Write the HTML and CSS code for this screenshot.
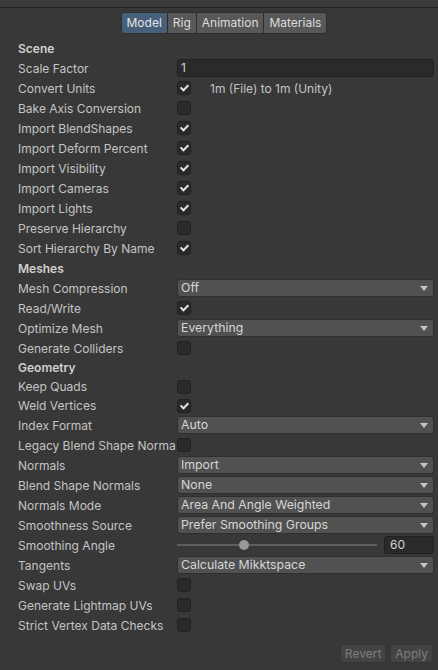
FILE: index.html
```html
<!DOCTYPE html>
<html>
<head>
<meta charset="utf-8">
<link rel="stylesheet" href="styles.css">
</head>
<body>
<div class="topbar"></div>
<div class="tabs">
  <div class="tab sel">Model</div>
  <div class="tab">Rig</div>
  <div class="tab">Animation</div>
  <div class="tab">Materials</div>
</div>
<div class="panel">
  <div class="row head h19"><span class="label">Scene</span></div>
  <div class="row"><span class="label">Scale Factor</span><div class="field text">1</div></div>
  <div class="row"><span class="label">Convert Units</span><span class="cb on"></span><span class="note">1m (File) to 1m (Unity)</span></div>
  <div class="row"><span class="label">Bake Axis Conversion</span><span class="cb"></span></div>
  <div class="row"><span class="label">Import BlendShapes</span><span class="cb on"></span></div>
  <div class="row"><span class="label">Import Deform Percent</span><span class="cb on"></span></div>
  <div class="row"><span class="label">Import Visibility</span><span class="cb on"></span></div>
  <div class="row"><span class="label">Import Cameras</span><span class="cb on"></span></div>
  <div class="row"><span class="label">Import Lights</span><span class="cb on"></span></div>
  <div class="row"><span class="label">Preserve Hierarchy</span><span class="cb"></span></div>
  <div class="row"><span class="label">Sort Hierarchy By Name</span><span class="cb on"></span></div>
  <div class="row head"><span class="label">Meshes</span></div>
  <div class="row"><span class="label">Mesh Compression</span><div class="field drop">Off</div></div>
  <div class="row"><span class="label">Read/Write</span><span class="cb on"></span></div>
  <div class="row"><span class="label">Optimize Mesh</span><div class="field drop">Everything</div></div>
  <div class="row"><span class="label">Generate Colliders</span><span class="cb"></span></div>
  <div class="row head h19"><span class="label">Geometry</span></div>
  <div class="row h19"><span class="label">Keep Quads</span><span class="cb"></span></div>
  <div class="row h19"><span class="label">Weld Vertices</span><span class="cb on"></span></div>
  <div class="row"><span class="label">Index Format</span><div class="field drop">Auto</div></div>
  <div class="row"><span class="label over">Legacy Blend Shape Norma</span><span class="cb"></span></div>
  <div class="row"><span class="label">Normals</span><div class="field drop">Import</div></div>
  <div class="row"><span class="label">Blend Shape Normals</span><div class="field drop">None</div></div>
  <div class="row"><span class="label">Normals Mode</span><div class="field drop">Area And Angle Weighted</div></div>
  <div class="row"><span class="label">Smoothness Source</span><div class="field drop">Prefer Smoothing Groups</div></div>
  <div class="row"><span class="label">Smoothing Angle</span>
    <div class="slider"><div class="track"><span class="thumb" style="left: 33.5%"></span></div><div class="field text num">60</div></div>
  </div>
  <div class="row"><span class="label">Tangents</span><div class="field drop">Calculate Mikktspace</div></div>
  <div class="row"><span class="label">Swap UVs</span><span class="cb"></span></div>
  <div class="row"><span class="label">Generate Lightmap UVs</span><span class="cb"></span></div>
  <div class="row"><span class="label">Strict Vertex Data Checks</span><span class="cb"></span></div>
</div>
<div class="footer">
  <button class="btn">Revert</button>
  <button class="btn">Apply</button>
</div>
</body>
</html>
```
FILE: styles.css
```css
html, body {
  margin: 0;
  padding: 0;
  background: #383838;
  width: 438px;
  height: 670px;
  overflow: hidden;
  font-family: Inter, "Noto Sans", sans-serif;
  font-size: 12px;
  color: #c4c4c4;
}
.topbar {
  height: 7px;
  background: #3a3a3a;
  border-bottom: 1px solid #232323;
}
.tabs {
  display: flex;
  justify-content: center;
  margin-top: 4px;
  height: 22px;
  padding-left: 10px;
}
.tab {
  box-sizing: border-box;
  height: 22px;
  line-height: 20px;
  padding: 0 5px;
  background: #585858;
  color: #dcdcdc;
  border: 1px solid #2e2e2e;
  border-left: none;
  font-size: 12px;
}
.tab:first-child {
  border-left: 1px solid #2e2e2e;
  border-radius: 3px 0 0 3px;
}
.tab:last-child {
  border-radius: 0 3px 3px 0;
}
.tab.sel {
  background: #46607c;
  color: #e4e4e4;
}
.panel {
  margin-top: 5px;
  padding: 0 4px 0 18px;
}
.row {
  display: flex;
  align-items: center;
  height: 20px;
}
.row.h19 { height: 19px; }
.label {
  width: 155px;
  flex: none;
  white-space: nowrap;
  overflow: hidden;
  margin-right: 4px;
}
.label.over {
  overflow: visible;
}
.head .label {
  font-weight: 600;
  color: #d0d0d0;
}
.cb {
  box-sizing: border-box;
  width: 14px;
  height: 14px;
  background: #2a2a2a;
  border: 1px solid #212121;
  border-radius: 3px;
  flex: none;
  position: relative;
  z-index: 1;
}
.cb.on::after {
  content: "";
  position: absolute;
  left: 4px;
  top: 1px;
  width: 3px;
  height: 6px;
  border: solid #e8e8e8;
  border-width: 0 2px 2px 0;
  transform: rotate(45deg);
}
.note {
  margin-left: 19px;
  color: #c4c4c4;
}
.field {
  box-sizing: border-box;
  flex: 1;
  height: 18px;
  line-height: 16px;
  border-radius: 3px;
  padding: 0 3px;
  white-space: nowrap;
}
.text {
  background: #2a2a2a;
  border: 1px solid #212121;
  color: #d2d2d2;
}
.drop {
  background: #515151;
  border: 1px solid #2f2f2f;
  color: #d6d6d6;
  position: relative;
  font-size: 12.3px;
}
.drop::after {
  content: "";
  position: absolute;
  right: 5px;
  top: 6px;
  border-left: 4px solid transparent;
  border-right: 4px solid transparent;
  border-top: 5px solid #c4c4c4;
}
.slider {
  flex: 1;
  display: flex;
  align-items: center;
  height: 18px;
}
.track {
  flex: 1;
  height: 2px;
  background: #5e5e5e;
  position: relative;
  margin-right: 7px;
}
.thumb {
  position: absolute;
  top: -4px;
  width: 10px;
  height: 10px;
  margin-left: -5px;
  border-radius: 50%;
  background: #999999;
}
.num {
  flex: none;
  width: 50px;
  padding-left: 5px;
}
.footer {
  display: flex;
  justify-content: flex-end;
  gap: 4px;
  padding: 0 5px 0 0;
  margin-top: 9px;
}
.btn {
  box-sizing: border-box;
  height: 19px;
  padding: 0 4px;
  font-family: Inter, "Noto Sans", sans-serif;
  font-size: 12px;
  color: #7d7d7d;
  background: #444444;
  border: 1px solid #353535;
  border-radius: 3px;
}
```
